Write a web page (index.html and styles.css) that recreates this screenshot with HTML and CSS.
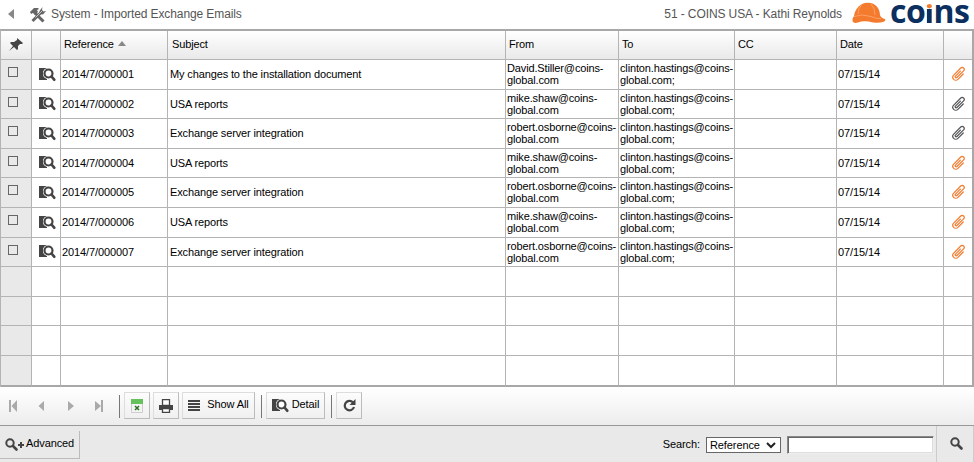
FILE: index.html
```html
<!DOCTYPE html>
<html lang="en">
<head>
<meta charset="utf-8">
<title>Imported Exchange Emails</title>
<link rel="stylesheet" href="styles.css">
</head>
<body>
<svg class="defs" width="0" height="0" aria-hidden="true">
<symbol id="detail" viewBox="0 0 17 16"><path d="M0 1h8v12H0z" fill="#444"/><circle cx="9.500" cy="6.500" r="5.700" fill="#fff"/><path d="M0 1h4v12H0z" fill="#444"/><circle cx="9.500" cy="6.500" r="4" fill="#fff" stroke="#444" stroke-width="2.200"/><path d="M12.500 9.500l2.700 3.200" stroke="#444" stroke-width="2.700" stroke-linecap="round"/></symbol>
<symbol id="clip" viewBox="0 0 16 16"><path transform="translate(8 8) rotate(45)" d="M-1-3V4a1 1 0 0 0 2 0V-5.500a2 2 0 0 0-4 0V4.500a3 3 0 0 0 6 0V-3" fill="none" stroke="currentColor" stroke-width="1.200" stroke-linecap="round"/></symbol>
<symbol id="lens" viewBox="0 0 14 14"><circle cx="5" cy="5" r="3.700" fill="none" stroke="#444" stroke-width="2"/><path d="M8 8l3.500 3.500" stroke="#444" stroke-width="2.600" stroke-linecap="round"/></symbol>
</svg>
<header class="top">
<svg class="back" viewBox="0 0 6 10"><path d="M6 0v10L0 5z" fill="#888"/></svg>
<svg class="tools" viewBox="0 0 16 16"><path d="M5 6l8.500 8.500M12 4.500L2.500 14" stroke="#666" stroke-width="3"/><path d="M0 5l4-4h4l1 1-2 1 1 2-3 3-2-2-2 1zM9.500 4l3-4-.5 3 1.500 1.500L16 4l-3 3.500-3-.5z" fill="#666"/><path d="M5.500 10.500L12 4" stroke="#eee" stroke-width=".7"/></svg>
<h1 class="title">System - Imported Exchange Emails</h1>
<span class="user">51 - COINS USA - Kathi Reynolds</span>
<svg class="helmet" viewBox="0 0 34 21"><path d="M1 20Q-.5 17 2 14C3 6 9 1 15 .7 23 0 28 6 28 13q1 3 5 4 1 2-2 3-4 1-10 .5Q12 18 6 20.500q-3 1-5-.5z" fill="#f47b2d"/><path d="M2 14.500q8-3 17 0 6 2.500 10 2M9.500 3Q6 6 6 12M19 2q4 4 4 11" fill="none" stroke="#ffa873" stroke-width=".8"/></svg>
<span class="logo">co<i>i</i>ns</span>
</header>
<main class="table">
<div class="row head"><div><svg class="pin" viewBox="0 0 14 13"><path d="M8 0l6 5-1 1-2 0-2 2 0 3-1 1-3-3-5 4 4-5-3-3 1-1 3 0 3-2z" fill="#444"/></svg></div><div></div><div>Reference<svg class="sort" viewBox="0 0 8 5"><path d="M0 5l4-5 4 5z" fill="#888"/></svg></div><div>Subject</div><div>From</div><div>To</div><div>CC</div><div>Date</div><div></div></div>
<div class="row"><div><b class="box"></b></div><div><svg class="det"><use href="#detail"/></svg></div><div>2014/7/000001</div><div>My changes to the installation document</div><div>David.Stiller@coins-<br>global.com</div><div>clinton.hastings@coins-<br>global.com;</div><div></div><div>07/15/14</div><div><svg class="clip hot"><use href="#clip"/></svg></div></div>
<div class="row"><div><b class="box"></b></div><div><svg class="det"><use href="#detail"/></svg></div><div>2014/7/000002</div><div>USA reports</div><div>mike.shaw@coins-<br>global.com</div><div>clinton.hastings@coins-<br>global.com;</div><div></div><div>07/15/14</div><div><svg class="clip"><use href="#clip"/></svg></div></div>
<div class="row"><div><b class="box"></b></div><div><svg class="det"><use href="#detail"/></svg></div><div>2014/7/000003</div><div>Exchange server integration</div><div>robert.osborne@coins-<br>global.com</div><div>clinton.hastings@coins-<br>global.com;</div><div></div><div>07/15/14</div><div><svg class="clip"><use href="#clip"/></svg></div></div>
<div class="row"><div><b class="box"></b></div><div><svg class="det"><use href="#detail"/></svg></div><div>2014/7/000004</div><div>USA reports</div><div>mike.shaw@coins-<br>global.com</div><div>clinton.hastings@coins-<br>global.com;</div><div></div><div>07/15/14</div><div><svg class="clip hot"><use href="#clip"/></svg></div></div>
<div class="row"><div><b class="box"></b></div><div><svg class="det"><use href="#detail"/></svg></div><div>2014/7/000005</div><div>Exchange server integration</div><div>robert.osborne@coins-<br>global.com</div><div>clinton.hastings@coins-<br>global.com;</div><div></div><div>07/15/14</div><div><svg class="clip hot"><use href="#clip"/></svg></div></div>
<div class="row"><div><b class="box"></b></div><div><svg class="det"><use href="#detail"/></svg></div><div>2014/7/000006</div><div>USA reports</div><div>mike.shaw@coins-<br>global.com</div><div>clinton.hastings@coins-<br>global.com;</div><div></div><div>07/15/14</div><div><svg class="clip hot"><use href="#clip"/></svg></div></div>
<div class="row"><div><b class="box"></b></div><div><svg class="det"><use href="#detail"/></svg></div><div>2014/7/000007</div><div>Exchange server integration</div><div>robert.osborne@coins-<br>global.com</div><div>clinton.hastings@coins-<br>global.com;</div><div></div><div>07/15/14</div><div><svg class="clip hot"><use href="#clip"/></svg></div></div>
<div class="row"><div></div><div></div><div></div><div></div><div></div><div></div><div></div><div></div><div></div></div>
<div class="row"><div></div><div></div><div></div><div></div><div></div><div></div><div></div><div></div><div></div></div>
<div class="row"><div></div><div></div><div></div><div></div><div></div><div></div><div></div><div></div><div></div></div>
<div class="row"><div></div><div></div><div></div><div></div><div></div><div></div><div></div><div></div><div></div></div>
</main>
<nav class="bar">
<svg class="pager" viewBox="0 0 95 12"><path d="M0 0h2v12H0zM8 0v12L2.500 6zM35 1v10L29.500 6zM59 1v10l6-5zM86 1v10l6-5zM92 0h2v12h-2z" fill="#aaa"/></svg>
<span class="sep"></span>
<button class="btn sq"><svg width="12" height="14"><path d="M.5.500h11v13H.5z" fill="#f4f4f4" stroke="#ccc"/><path d="M0 0h12v5H0z" fill="#66c25a"/><path d="M4 7l4 4M8 7l-4 4" stroke="#27731f" stroke-width="1.500"/></svg></button>
<button class="btn sq"><svg width="14" height="14"><path d="M3.500.500h7v6h-7z" fill="#fff" stroke="#444" stroke-width="1.300"/><path d="M0 6h14v5H0z" fill="#444"/><path d="M3.500 9.500h7v4h-7z" fill="#fff" stroke="#444" stroke-width="1.300"/></svg></button>
<button class="btn all"><svg width="12" height="11"><path d="M0 0h12v2H0zM0 3h12v2H0zM0 6h12v2H0zM0 9h12v2H0z" fill="#444"/></svg><span>Show All</span></button>
<span class="sep"></span>
<button class="btn dt"><svg class="det"><use href="#detail"/></svg><span>Detail</span></button>
<span class="sep"></span>
<button class="btn sq"><svg width="13" height="13"><path d="M10 3.500A4.700 4.700 0 1 0 11 8" fill="none" stroke="#444" stroke-width="2.200"/><path d="M12.500 0v6h-6z" fill="#444"/></svg></button>
</nav>
<footer class="foot">
<button class="adv"><svg class="lens"><use href="#lens"/></svg><svg width="6" height="6"><path d="M2 0h2v2h2v2H4v2H2V4H0V2h2z" fill="#444"/></svg><span>Advanced</span></button>
<label class="label">Search:</label>
<div class="select"><span>Reference</span><svg width="10" height="7"><path d="M1 1l4 4 4-4" fill="none" stroke="#222" stroke-width="2"/></svg></div>
<input class="field" aria-label="Search text">
<button class="go"><svg class="lens"><use href="#lens"/></svg></button>
</footer>
</body>
</html>
```
FILE: styles.css
```css
* { box-sizing: border-box; }
body { margin: 0; width: 974px; height: 462px; overflow: hidden; background: #fff; font: 11px/12px "Liberation Sans", Arial, sans-serif; letter-spacing: -0.1px; color: #000; }
svg { display: block; flex: none; }
.defs { position: absolute; }
button { font: inherit; color: inherit; letter-spacing: inherit; padding: 0; border: 0; background: none; }
.top { display: flex; height: 29px; align-items: flex-start; color: #555; }
.back { width: 6px; height: 10px; margin: 9px 0 0 8px; }
.tools { width: 16px; height: 16px; margin: 7px 0 0 16px; }
.title, .user { margin: 6px 0 0 5px; font-size: 12px; font-weight: 400; line-height: 16px; white-space: nowrap; }
.user { margin-left: auto; }
.helmet { width: 34px; height: 21px; margin: 2px 0 0 10px; }
.logo { width: 79px; height: 28px; margin: 0 5px 0 4px; font: 700 32px/21px "Open Sans", sans-serif; letter-spacing: -0.5px; color: #0b2f5e; white-space: nowrap; }
.logo i { font-style: normal; font-size: 25px; font-weight: 800; line-height: 21px; letter-spacing: 0; color: transparent; background: linear-gradient(#f47b2d 0 12px, #0b2f5e 12px); -webkit-background-clip: text; background-clip: text; }
.table { display: grid; height: 358px; border: 1px solid #b4b4b4; border-top: 2px solid #a8a8a8; border-right: 2px solid #a8a8a8; border-bottom: 0; grid-template-columns: 31px 29px 107px 338px 113px 116px 102px 107px 28px; grid-template-rows: 29px 30px 29px 30px 29px 30px 30px 29px 30px 29px 30px 31px; }
.row { display: contents; }
.row > div { display: flex; align-items: center; border-right: 1px solid #b4b4b4; border-bottom: 1px solid #b4b4b4; padding: 0 0 1px 1px; white-space: nowrap; }
.row > div:nth-child(4) { padding-left: 2px; letter-spacing: -0.13px; }
.row > div:nth-child(5), .row > div:nth-child(6) { letter-spacing: -0.14px; }
.row > div:last-child { border-right: 0; }
.row:last-child > div { border-bottom: 2px solid #a8a8a8; }
.row > div:first-child { background: #e9e9e9; }
.row.head > div { background: linear-gradient(#fff, #e9e9e9); padding-left: 3px; padding-bottom: 2px; }
.row.head > div:nth-child(4) { padding-left: 4px; }
.box { width: 10px; height: 10px; border: 1px solid #666; margin: -4px 0 0 6px; }
.det { width: 17px; height: 16px; }
.row .det { margin: 1px 0 0 6px; }
.pin { width: 14px; height: 13px; margin-left: 5px; }
.sort { width: 8px; height: 5px; margin: -1px 0 0 4px; }
.clip { width: 16px; height: 16px; margin-left: 6px; color: #555; }
.clip.hot { color: #f47b2d; }
.bar { display: flex; height: 39px; border-bottom: 1px solid #999; background: linear-gradient(#fff, #ececec); align-items: flex-start; }
.pager { width: 95px; height: 12px; margin: 13px 0 0 9px; }
.sep { width: 1px; height: 23px; background: #777; margin: 8px 4px 0 6px; }
.pager + .sep { margin-left: 15px; }
.btn { height: 27px; margin: 5px 3px 0 0; border: 1px solid #ddd; border-right-color: #bbb; border-bottom-color: #bbb; display: flex; align-items: center; justify-content: center; }
.sq { width: 26px; }
.all { width: 73px; margin-right: 0; }
.dt { width: 59px; margin-right: 0; }
.btn span { margin: -3px 0 0 7px; }
.btn .det + span { margin-left: 3px; }
.foot { display: flex; height: 36px; background: #e9e9e9; align-items: flex-start; }
.adv { width: 80px; height: 28px; margin-top: 5px; display: flex; align-items: center; padding-left: 5px; border-right: 1px solid #bbb; border-bottom: 1px solid #bbb; }
.lens { width: 14px; height: 14px; }
.adv .lens { margin-right: -1px; }
.adv span { margin: -3px 0 0 2px; }
.label { margin: 12px 6px 0 auto; }
.select { width: 75px; height: 16px; margin: 11px 6px 0 0; border: 1px solid #666; background: #fff; display: flex; align-items: center; justify-content: space-between; padding: 0 4px 0 3px; }
.field { width: 147px; height: 18px; margin: 10px 2px 0 0; padding: 0; border: 1px solid; border-color: #888 #eee #eee #888; box-shadow: inset 1px 1px #666, inset -1px -1px #ddd; background: #fff; outline: 0; }
.go { width: 38px; height: 36px; border: 1px solid #ccc; border-width: 0 1px; display: flex; justify-content: center; padding: 11px 0 0 3px; }
```
